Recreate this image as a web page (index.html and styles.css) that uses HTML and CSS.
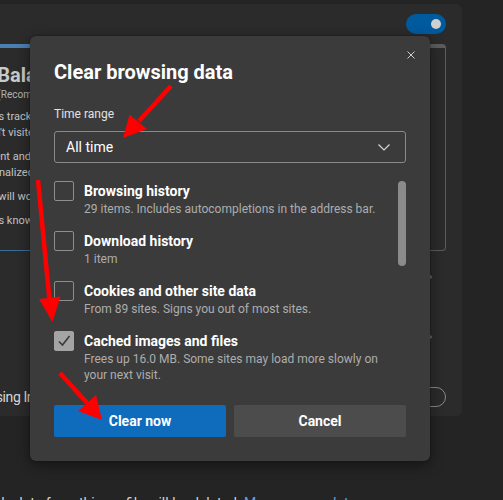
FILE: index.html
```html
<!DOCTYPE html>
<html lang="en">
<head>
<meta charset="utf-8">
<title>Clear browsing data</title>
<link rel="stylesheet" href="styles.css">
</head>
<body>
<div class="page">
  <div class="canvas">
    <section class="tp-card">
      <div class="tp-head">
        <h3 class="tp-title">Tracking prevention</h3>
        <span class="toggle toggle-on"><span class="knob"></span></span>
      </div>
      <div class="tp-levels">
        <div class="level">
          <div class="level-head">
            <svg class="level-icon" width="18" height="18" viewBox="0 0 18 18"><circle cx="9" cy="9" r="7" fill="none" stroke="#9a9a9a" stroke-width="1.2"/></svg>
            <div>
              <div class="level-name">Basic</div>
            </div>
          </div>
          <ul class="level-list">
            <li>Allows most trackers across all sites</li>
            <li>Content and ads will likely be personalized</li>
            <li>Sites will work as expected</li>
            <li>Blocks known harmful trackers</li>
          </ul>
        </div>
        <div class="level level-selected">
          <div class="level-head">
            <svg class="level-icon" width="18" height="18" viewBox="0 0 18 18"><circle cx="9" cy="9" r="7" fill="none" stroke="#9a9a9a" stroke-width="1.2"/></svg>
            <div>
              <div class="level-name">Balanced</div>
              <div class="level-note">(Recommended)</div>
            </div>
          </div>
          <ul class="level-list">
            <li>Blocks trackers from sites you haven't visited</li>
            <li>Content and ads will likely be less personalized</li>
            <li>Sites will work as expected</li>
            <li>Blocks known harmful trackers</li>
          </ul>
        </div>
        <div class="level">
          <div class="level-head">
            <svg class="level-icon" width="18" height="18" viewBox="0 0 18 18"><circle cx="9" cy="9" r="7" fill="none" stroke="#9a9a9a" stroke-width="1.2"/></svg>
            <div>
              <div class="level-name">Strict</div>
            </div>
          </div>
          <ul class="level-list">
            <li>Blocks a majority of trackers from all sites</li>
            <li>Content and ads will likely have minimal personalization</li>
            <li>Parts of sites might not work</li>
            <li>Blocks known harmful trackers</li>
          </ul>
        </div>
      </div>
      <div class="tp-row tp-row-first">
        <div>
          <div class="row-label">Blocked trackers</div>
          <div class="row-desc">View the sites that we've blocked from tracking you</div>
        </div>
        <svg class="row-chevron" width="8" height="12" viewBox="0 0 8 12"><path d="M2.5 1 L7.5 6 L2.5 11" fill="none" stroke="#9a9a9a" stroke-width="1"/></svg>
      </div>
      <div class="tp-row tp-row-second">
        <div>
          <div class="row-label">Exceptions</div>
          <div class="row-desc">Allow all trackers on sites you choose</div>
        </div>
        <svg class="row-chevron" width="8" height="12" viewBox="0 0 8 12"><path d="M2.5 1 L7.5 6 L2.5 11" fill="none" stroke="#9a9a9a" stroke-width="1"/></svg>
      </div>
      <div class="tp-row tp-row-last">
        <div class="row-label row-label-long">Always use “Strict” tracking prevention when browsing InPrivate</div>
        <span class="toggle toggle-off"><span class="knob"></span></span>
      </div>
    </section>
    <p class="clear-note">This includes history, passwords, cookies, and more. Only data from this profile will be deleted. <a class="note-link" href="#">Manage your data</a></p>
  </div>

  <div class="dialog" role="dialog" aria-label="Clear browsing data">
    <div class="dlg-head">
      <h2 class="dlg-title">Clear browsing data</h2>
      <button class="dlg-close" aria-label="Close">
        <svg width="8" height="8" viewBox="0 0 8 8"><path d="M0.5 0.5 L7.5 7.5 M7.5 0.5 L0.5 7.5" stroke="#cfcfcf" stroke-width="1" fill="none"/></svg>
      </button>
    </div>
    <div class="field-label">Time range</div>
    <div class="select">
      <span>All time</span>
      <svg width="12" height="7" viewBox="0 0 12 7"><path d="M0.5 0.5 L6 6 L11.5 0.5" fill="none" stroke="#dcdcdc" stroke-width="1.1"/></svg>
    </div>
    <div class="data-list">
      <div class="items">
        <div class="item">
          <span class="cb"></span>
          <div class="item-text">
            <div class="item-title">Browsing history</div>
            <div class="item-desc">29 items. Includes autocompletions in the address bar.</div>
          </div>
        </div>
        <div class="item">
          <span class="cb"></span>
          <div class="item-text">
            <div class="item-title">Download history</div>
            <div class="item-desc">1 item</div>
          </div>
        </div>
        <div class="item">
          <span class="cb"></span>
          <div class="item-text">
            <div class="item-title">Cookies and other site data</div>
            <div class="item-desc">From 89 sites. Signs you out of most sites.</div>
          </div>
        </div>
        <div class="item">
          <span class="cb cb-checked"><svg width="20" height="20" viewBox="0 0 20 20"><path d="M5 10.5 L8.5 14 L15.5 5" fill="none" stroke="#3a3a3a" stroke-width="1.6"/></svg></span>
          <div class="item-text">
            <div class="item-title">Cached images and files</div>
            <div class="item-desc">Frees up 16.0 MB. Some sites may load more slowly on your next visit.</div>
          </div>
        </div>
        <div class="item">
          <span class="cb"></span>
          <div class="item-text">
            <div class="item-title">Passwords</div>
            <div class="item-desc">None</div>
          </div>
        </div>
      </div>
      <div class="scroll-track"><div class="scroll-thumb"></div></div>
    </div>
    <div class="dlg-actions">
      <button class="btn btn-primary">Clear now</button>
      <button class="btn btn-secondary">Cancel</button>
    </div>
  </div>

  <svg class="annotations" width="503" height="500" viewBox="0 0 503 500" aria-hidden="true">
    <g stroke="#ff0000" stroke-width="4.5" fill="none">
      <line x1="171" y1="86" x2="139" y2="121"/>
      <line x1="38" y1="180" x2="49.5" y2="300"/>
      <line x1="60" y1="373" x2="87" y2="403"/>
    </g>
    <g fill="#ff0000">
      <polygon points="123,138 129.5,114.5 147,129"/>
      <polygon points="52.5,322 39,299 60.5,296.5"/>
      <polygon points="102,420 78,411 96,395"/>
    </g>
  </svg>
</div>
</body>
</html>
```
FILE: styles.css
```css
* { box-sizing: border-box; }

body {
  margin: 0;
  background: #242424;
  font-family: Roboto, "Liberation Sans", sans-serif;
}

.page {
  position: relative;
  width: 503px;
  height: 500px;
  overflow: hidden;
  background: #242424;
}

.canvas {
  width: 773px;
  margin-left: -311px;
  padding-top: 4px;
}

/* Tracking prevention settings card */
.tp-card {
  height: 412px;
  padding: 10px 16px 0;
  background: #2b2b2b;
  border-radius: 6px;
  overflow: hidden;
}

.tp-head {
  display: flex;
  justify-content: space-between;
  align-items: center;
  height: 20px;
}

.tp-title {
  margin: 0;
  font-size: 16px;
  font-weight: 700;
  color: #e0e0e0;
}

.toggle {
  display: flex;
  align-items: center;
  width: 40px;
  height: 20px;
  padding: 0 5px;
  border-radius: 10px;
}

.toggle .knob {
  width: 10px;
  height: 10px;
  border-radius: 50%;
  background: #cfcfcf;
}

.toggle-on {
  justify-content: flex-end;
  background: #005a9e;
}

.toggle-off {
  justify-content: flex-start;
  border: 1px solid #8a8a8a;
  padding: 0 4px;
}

.tp-levels {
  display: grid;
  grid-template-columns: repeat(3, 1fr);
  gap: 16px;
  height: 207px;
  margin-top: 10px;
}

.level {
  border: 1px solid #5c5c5c;
  border-top-width: 4px;
  border-radius: 4px;
  padding: 14px 16px 0 13px;
}

.level-selected {
  border-color: #3d6c98;
  border-top-color: #4a7fb2;
}

.level-head {
  display: flex;
  gap: 8px;
  align-items: flex-start;
}

.level-icon {
  flex-shrink: 0;
  margin-top: 4px;
}

.level-name {
  font-size: 20px;
  line-height: 26px;
  font-weight: 700;
  color: #c9c9c9;
}

.level-note {
  font-size: 10px;
  line-height: 13px;
  color: #b2b2b2;
}

.level-list {
  list-style: none;
  margin: 8px 0 0;
  padding: 0;
  max-width: 175px;
}

.level-list li {
  font-size: 11px;
  line-height: 16px;
  color: #c4c4c4;
}

.level-list li + li {
  margin-top: 8px;
}

.tp-row {
  display: flex;
  justify-content: space-between;
  align-items: center;
}

.tp-row-first { height: 52px; }
.tp-row-second { height: 52px; margin-top: 8px; }
.tp-row-last { height: 40px; margin-top: 14px; }

.row-label {
  font-size: 14px;
  line-height: 20px;
  color: #d8d8d8;
  white-space: nowrap;
}

.row-label-long {
  letter-spacing: -0.4px;
}

.row-desc {
  font-size: 12px;
  line-height: 16px;
  color: #a8a8a8;
  white-space: nowrap;
}

.row-chevron {
  margin-right: 14px;
}

.clear-note {
  margin: 77px 0 0 -34px;
  font-size: 14px;
  line-height: 20px;
  color: #d6d6d6;
  white-space: nowrap;
}

.note-link {
  color: #5aa5ec;
  text-decoration: none;
}

/* Dialog */
.dialog {
  position: absolute;
  left: 30px;
  top: 36px;
  width: 400px;
  padding: 0 24px 24px;
  background: #3b3b3b;
  border-radius: 6px;
  box-shadow: 0 4px 14px rgba(0, 0, 0, 0.45), 0 0 2px rgba(0, 0, 0, 0.4);
  color: #fff;
}

.dlg-head {
  display: flex;
  align-items: flex-start;
}

.dlg-title {
  flex: 1;
  margin: 22px 0 0;
  font-size: 20px;
  line-height: 28px;
  font-weight: 700;
  color: #fff;
}

.dlg-close {
  display: flex;
  align-items: center;
  justify-content: center;
  width: 24px;
  height: 24px;
  margin: 7px -16.5px 0 0;
  padding: 0;
  border: 0;
  background: transparent;
}

.field-label {
  margin-top: 20px;
  font-size: 12px;
  line-height: 16px;
  color: #e2e2e2;
}

.select {
  display: flex;
  justify-content: space-between;
  align-items: center;
  height: 32px;
  margin-top: 9px;
  padding: 0 15px 0 11px;
  border: 1px solid #8a8a8a;
  border-radius: 3px;
  font-size: 14px;
  color: #fff;
}

.data-list {
  display: flex;
  gap: 8px;
  height: 216px;
  margin-top: 10px;
  overflow: hidden;
}

.items {
  flex: 1;
  display: flex;
  flex-direction: column;
  gap: 14px;
  padding-top: 8px;
}

.item {
  display: flex;
  gap: 10px;
  align-items: flex-start;
}

.cb {
  flex-shrink: 0;
  width: 20px;
  height: 20px;
  border: 1px solid #8e8e8e;
  border-radius: 2px;
}

.cb svg {
  display: block;
  margin: -1px;
}

.cb-checked {
  background: #a4a4a4;
  border-color: #a4a4a4;
}

.item-text {
  margin-top: 1px;
}

.item-title {
  font-size: 14px;
  line-height: 19px;
  font-weight: 700;
  color: #fff;
}

.item-desc {
  font-size: 12px;
  line-height: 16px;
  color: #adadad;
}

.scroll-track {
  width: 8px;
  flex-shrink: 0;
  padding-top: 8px;
}

.scroll-thumb {
  height: 85px;
  border-radius: 4px;
  background: #8b8b8b;
}

.dlg-actions {
  display: grid;
  grid-template-columns: 1fr 1fr;
  gap: 8px;
  margin-top: 16px;
}

.btn {
  height: 32px;
  border: 0;
  border-radius: 2px;
  font-family: Roboto, "Liberation Sans", sans-serif;
  font-size: 14px;
  font-weight: 700;
  color: #fff;
}

.btn-primary { background: #0f6cbd; }
.btn-secondary { background: #4c4c4c; }

.annotations {
  position: absolute;
  left: 0;
  top: 0;
  pointer-events: none;
}
```
